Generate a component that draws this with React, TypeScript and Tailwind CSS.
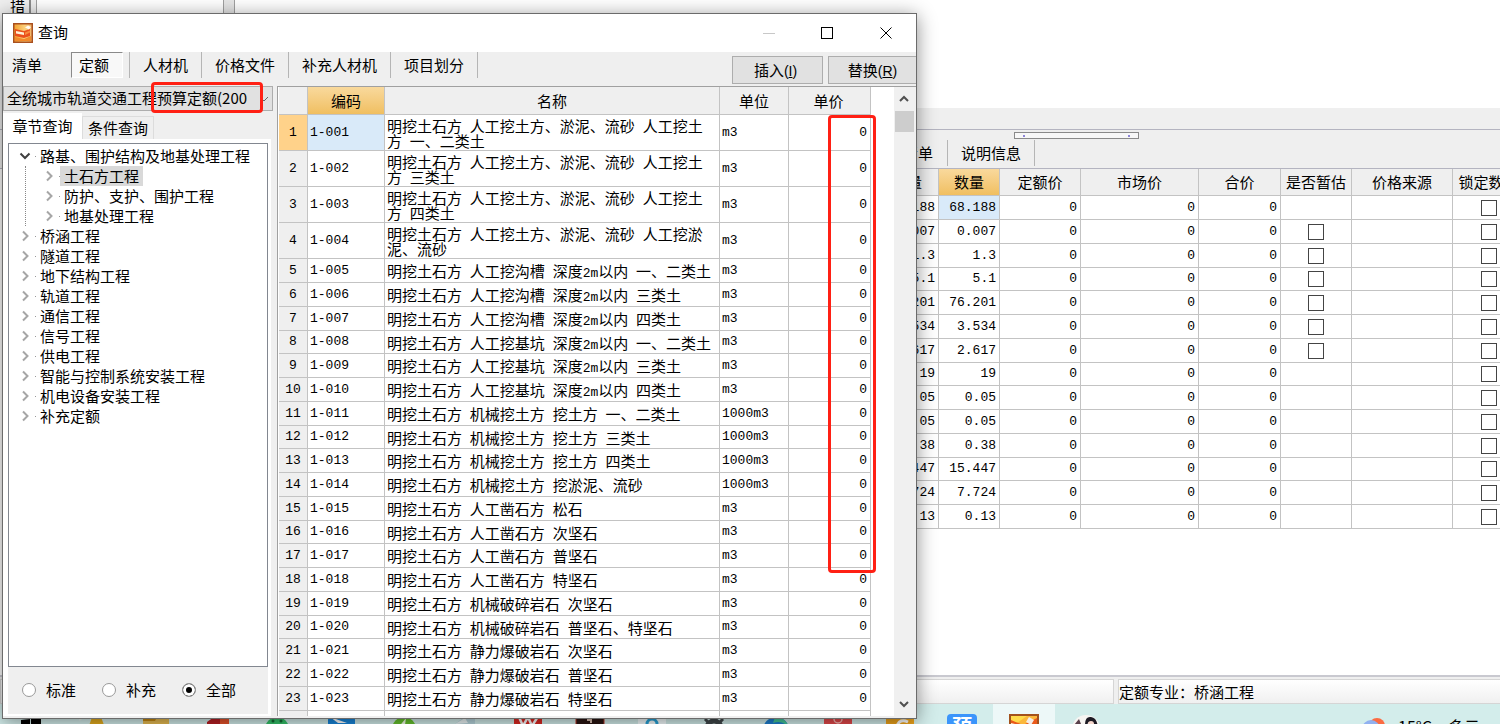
import type { ReactNode } from 'react';
import clsx from 'clsx';

type QuotaRow = { name: string; unit: string };

const quotas: QuotaRow[] = [
  { name: '明挖土石方 人工挖土方、淤泥、流砂 人工挖土方 一、二类土', unit: 'm3' },
  { name: '明挖土石方 人工挖土方、淤泥、流砂 人工挖土方 三类土', unit: 'm3' },
  { name: '明挖土石方 人工挖土方、淤泥、流砂 人工挖土方 四类土', unit: 'm3' },
  { name: '明挖土石方 人工挖土方、淤泥、流砂 人工挖淤泥、流砂', unit: 'm3' },
  { name: '明挖土石方 人工挖沟槽 深度2m以内 一、二类土', unit: 'm3' },
  { name: '明挖土石方 人工挖沟槽 深度2m以内 三类土', unit: 'm3' },
  { name: '明挖土石方 人工挖沟槽 深度2m以内 四类土', unit: 'm3' },
  { name: '明挖土石方 人工挖基坑 深度2m以内 一、二类土', unit: 'm3' },
  { name: '明挖土石方 人工挖基坑 深度2m以内 三类土', unit: 'm3' },
  { name: '明挖土石方 人工挖基坑 深度2m以内 四类土', unit: 'm3' },
  { name: '明挖土石方 机械挖土方 挖土方 一、二类土', unit: '1000m3' },
  { name: '明挖土石方 机械挖土方 挖土方 三类土', unit: '1000m3' },
  { name: '明挖土石方 机械挖土方 挖土方 四类土', unit: '1000m3' },
  { name: '明挖土石方 机械挖土方 挖淤泥、流砂', unit: '1000m3' },
  { name: '明挖土石方 人工凿石方 松石', unit: 'm3' },
  { name: '明挖土石方 人工凿石方 次坚石', unit: 'm3' },
  { name: '明挖土石方 人工凿石方 普坚石', unit: 'm3' },
  { name: '明挖土石方 人工凿石方 特坚石', unit: 'm3' },
  { name: '明挖土石方 机械破碎岩石 次坚石', unit: 'm3' },
  { name: '明挖土石方 机械破碎岩石 普坚石、特坚石', unit: 'm3' },
  { name: '明挖土石方 静力爆破岩石 次坚石', unit: 'm3' },
  { name: '明挖土石方 静力爆破岩石 普坚石', unit: 'm3' },
  { name: '明挖土石方 静力爆破岩石 特坚石', unit: 'm3' },
];

const amounts = [
  '68.188', '0.007', '1.3', '5.1', '76.201', '3.534', '2.617',
  '19', '0.05', '0.05', '0.38', '15.447', '7.724', '0.13',
];

const chapters = [
  '桥涵工程', '隧道工程', '地下结构工程', '轨道工程', '通信工程', '信号工程',
  '供电工程', '智能与控制系统安装工程', '机电设备安装工程', '补充定额',
];

const subChapters = ['土石方工程', '防护、支护、围护工程', '地基处理工程'];

const rowHeight = (i: number) => (i % 4 === 3 ? 'h-[23px]' : 'h-6');

const cell = 'border-r border-b border-[#c3c3c3] p-0';
const head = 'border-r border-b border-[#c3c3c3] p-0 font-normal bg-[#efefef]';
const headActive = 'bg-linear-to-b from-[#f9d99c] to-[#f0bf60]';
const mono = "font-['Liberation_Mono',monospace] text-[13px]";

/* Chinese text with the latin runs set in half-width type */
function Mixed({ text }: { text: string }) {
  return (
    <>
      {text.split(/([ -~]+)/).map((part, i) =>
        i % 2 ? (
          <span key={i} className="font-['Liberation_Mono',monospace] text-[13px] leading-0">
            {part}
          </span>
        ) : (
          part
        ),
      )}
    </>
  );
}

function AppIcon({ className }: { className?: string }) {
  return (
    <svg viewBox="0 0 20 20" className={className}>
      <defs>
        <linearGradient id="appIcon" x1="0" y1="0" x2="1" y2="0">
          <stop offset="0" stopColor="#f3a02c" />
          <stop offset="0.6" stopColor="#fbd07c" />
          <stop offset="1" stopColor="#f0b067" />
        </linearGradient>
      </defs>
      <rect x="0.75" y="0.75" width="18.5" height="18.5" fill="url(#appIcon)" stroke="#a9501f" strokeWidth="1.5" />
      <path d="M2 6 L11 8 L17 6 V13 L11 15 L2 13 Z" fill="#ea4f1c" />
      <path d="M3 8 L11 9.5 V12 L3 10.5 Z" fill="#fff1d6" />
      <path d="M12 9.5 L17 7.5 V9.5 L12 12 Z" fill="#f78a3c" />
      <path d="M12 4.5 L15 2.5 L18 4 L16 6.5 Z" fill="#fffaf0" />
      <path d="M2 14 L11 16 L18 13 V18 H2 Z" fill="#f28a2a" />
    </svg>
  );
}

function Chevron({ open }: { open?: boolean }) {
  return (
    <svg viewBox="0 0 12 12" className="size-3 shrink-0">
      <path
        d={open ? 'M1.5 3.5 L6 8 L10.5 3.5' : 'M4 1.5 L8.5 6 L4 10.5'}
        fill="none"
        stroke={open ? '#404040' : '#a6a6a6'}
        strokeWidth="2"
      />
    </svg>
  );
}

function TreeItem({ label, open, selected }: { label: string; open?: boolean; selected?: boolean }) {
  return (
    <div className="flex h-5 items-center">
      <Chevron open={open} />
      <span className="ml-1 w-px border-b border-[#999]" />
      <span className={clsx('px-1 leading-5', selected && 'bg-[#d9d9d9]')}>{label}</span>
    </div>
  );
}

function CheckBox({ label }: { label: string }) {
  return (
    <input
      type="checkbox"
      aria-label={label}
      className="mx-auto block size-4 appearance-none border border-[#444] bg-white"
    />
  );
}

function TitleBar() {
  return (
    <header className="flex h-[38px] items-center bg-white pl-2.5">
      <AppIcon className="size-5" />
      <h1 className="ml-[5px] flex-1 pb-0.5 text-[15px] leading-5">查询</h1>
      <button aria-label="最小化" className="flex h-full w-[58px] items-center justify-center">
        <span className="h-px w-3 bg-[#c8c8c8]" />
      </button>
      <button aria-label="最大化" className="flex h-full w-[58px] items-center justify-center">
        <span className="size-3 border border-black" />
      </button>
      <button aria-label="关闭" className="flex h-full w-[60px] items-center justify-center">
        <svg viewBox="0 0 12 12" className="size-3">
          <path d="M0.5 0.5 L11.5 11.5 M11.5 0.5 L0.5 11.5" stroke="#000" fill="none" />
        </svg>
      </button>
    </header>
  );
}

function Toolbar() {
  return (
    <div className="flex h-[34px]">
      <nav className="flex h-[26px]">
        <button className="w-[68px] pl-[9px] text-left">清单</button>
        <button className="h-[26px] w-[52px] border border-t-[#8a8a8a] border-r-white border-b-white border-l-[#8a8a8a] bg-[#f8f8f8] pl-[7px] text-left">
          定额
        </button>
        <span className="w-[7px] border-r border-[#b5b5b5]" />
        {['人材机', '价格文件', '补充人材机', '项目划分'].map((tab) => (
          <button key={tab} className="border-r border-[#b5b5b5] px-[13px]">
            {tab}
          </button>
        ))}
      </nav>
      <div className="flex flex-1 justify-end gap-[5px] pt-1 pb-0.5">
        <button className="w-[91px] border border-[#adadad] bg-[#e1e1e1] pr-1">
          插入<span className="font-['Liberation_Sans',sans-serif] text-sm">(<u>I</u>)</span>
        </button>
        <button className="w-[88px] border border-r-0 border-[#adadad] bg-[#e1e1e1]">
          替换<span className="font-['Liberation_Sans',sans-serif] text-sm">(<u>R</u>)</span>
        </button>
      </div>
    </div>
  );
}

function SidePanel() {
  return (
    <aside className="flex w-[270px] shrink-0 flex-col">
      <div className="relative">
        <select
          aria-label="定额库"
          className="block h-[25px] w-full appearance-none border border-[#adadad] bg-[#e1e1e1] pb-0.5 pl-[3px]"
        >
          <option>全统城市轨道交通工程预算定额(200</option>
        </select>
        <svg viewBox="0 0 10 6" className="pointer-events-none absolute top-2.5 right-1 h-1.5 w-2.5">
          <path d="M1 1 L5 5 L9 1" fill="none" stroke="#666" />
        </svg>
        <span className="pointer-events-none absolute -top-1 left-[148px] h-[31px] w-28 rounded border-3 border-[#ff2014]" />
      </div>

      <div className="mt-0.5 flex h-[26px] items-end">
        <button className="h-[26px] w-[79px] bg-white leading-6">章节查询</button>
        <button className="h-[23px] w-[72px] border border-b-0 border-[#dcdcdc] leading-5">条件查询</button>
      </div>

      <div className="mr-0.5 mb-0.5 flex flex-1 flex-col border-2 border-t-4 border-r-3 border-l-5 border-white">
        <div className="flex-1 border border-[#828790] bg-white pt-0.5 pl-2.5">
          <TreeItem label="路基、围护结构及地基处理工程" open />
          <div className="ml-1.5 border-l border-dotted border-[#888] pl-[17px]">
            {subChapters.map((label, i) => (
              <TreeItem key={label} label={label} selected={i === 0} />
            ))}
          </div>
          {chapters.map((label) => (
            <TreeItem key={label} label={label} />
          ))}
        </div>
        <div className="flex h-[47px] items-center gap-[26px] pb-0.5 pl-3.5">
          {['标准', '补充', '全部'].map((label) => (
            <label key={label} className="flex items-center gap-2.5">
              <input
                type="radio"
                name="scope"
                defaultChecked={label === '全部'}
                className="size-3.5 appearance-none rounded-full border border-[#999] bg-white checked:bg-black checked:shadow-[inset_0_0_0_3px_white]"
              />
              <span className="w-[30px]">{label}</span>
            </label>
          ))}
        </div>
      </div>
    </aside>
  );
}

function QuotaGrid() {
  return (
    <section className="relative mb-0.5 ml-1 flex flex-1 overflow-hidden border-t border-l border-[#a0a0a0] bg-white pl-px">
      <table className="w-[592px] shrink-0 table-fixed border-separate border-spacing-0 self-start">
        <thead>
          <tr className="h-7">
            <th className={clsx(head, 'w-[29px]')} />
            <th className={clsx(head, headActive, 'w-[77px]')}>编码</th>
            <th className={head}>名称</th>
            <th className={clsx(head, 'w-[69px]')}>单位</th>
            <th className={clsx(head, 'w-[82px] pr-0.5')}>单价</th>
          </tr>
        </thead>
        <tbody>
          {quotas.map((row, i) => (
            <tr key={i} className={i < 4 ? 'h-9' : rowHeight(i)}>
              <td className={clsx(cell, mono, 'text-center', i === 0 ? 'bg-[#ffd28a]' : 'bg-[#efefef]')}>{i + 1}</td>
              <td className={clsx(cell, mono, 'pl-0.5', i === 0 && 'bg-[#d9eaf9]')}>
                1-{String(i + 1).padStart(3, '0')}
              </td>
              <td className={clsx(cell, 'pl-0.5 leading-[15px]', i < 4 && 'pr-2')}>
                <Mixed text={row.name} />
              </td>
              <td className={clsx(cell, mono, 'pl-0.5')}>{row.unit}</td>
              <td className={clsx(cell, mono, 'pr-[3px] text-right')}>0</td>
            </tr>
          ))}
          <tr className="h-6">
            <td className={clsx(cell, 'bg-[#efefef]')} />
            <td className={cell} />
            <td className={clsx(cell, 'pl-0.5 leading-[15px]')}>
              <Mixed text="明挖土石方 机械挖翻斗车 土方 维" />
            </td>
            <td className={cell} />
            <td className={cell} />
          </tr>
        </tbody>
      </table>

      <div className="ml-auto flex w-[22px] flex-col items-center bg-[#f0f0f0] pr-0.5">
        <button aria-label="向上滚动" className="flex h-6 w-full items-center justify-center">
          <svg viewBox="0 0 10 8" className="h-2 w-2.5">
            <path d="M1 6 L5 2 L9 6" fill="none" stroke="#505050" strokeWidth="2" />
          </svg>
        </button>
        <span className="h-[21px] w-[19px] bg-[#cdcdcd]" />
        <button aria-label="向下滚动" className="mt-auto flex h-6 w-full items-center justify-center">
          <svg viewBox="0 0 10 8" className="h-2 w-2.5">
            <path d="M1 2 L5 6 L9 2" fill="none" stroke="#505050" strokeWidth="2" />
          </svg>
        </button>
      </div>
      <span className="pointer-events-none absolute top-7 left-[550px] h-[458px] w-12 rounded border-3 border-[#ff2014]" />
    </section>
  );
}

function QueryDialog() {
  return (
    <div
      role="dialog"
      aria-label="查询"
      className="absolute top-[13px] bottom-[5px] left-0.5 z-10 flex w-[915px] flex-col overflow-hidden border border-[#6b6b6b] bg-[#efefef] shadow-[0_3px_18px_rgba(0,0,0,0.45)]"
    >
      <TitleBar />
      <Toolbar />
      <div className="flex min-h-0 flex-1">
        <SidePanel />
        <QuotaGrid />
      </div>
    </div>
  );
}

function ResourceTable() {
  return (
    <table className="ml-[876px] w-[649px] table-fixed border-separate border-spacing-0">
      <thead>
        <tr className="h-[27px]">
          <th className={clsx(head, 'w-[63px]')}>含量</th>
          <th className={clsx(head, headActive, 'w-[61px]')}>数量</th>
          <th className={clsx(head, 'w-[81px]')}>定额价</th>
          <th className={clsx(head, 'w-[118px]')}>市场价</th>
          <th className={clsx(head, 'w-[82px]')}>合价</th>
          <th className={clsx(head, 'w-[71px]')}>是否暂估</th>
          <th className={clsx(head, 'w-[101px]')}>价格来源</th>
          <th className={head}>锁定数量</th>
        </tr>
      </thead>
      <tbody>
        {amounts.map((amount, i) => (
          <tr key={i} className={rowHeight(i)}>
            <td className={clsx(cell, mono, 'pr-[3px] text-right')}>{amount}</td>
            <td className={clsx(cell, mono, 'pr-[3px] text-right', i === 0 && 'bg-[#d9eaf9]')}>{amount}</td>
            <td className={clsx(cell, mono, 'pr-[3px] text-right')}>0</td>
            <td className={clsx(cell, mono, 'pr-[3px] text-right')}>0</td>
            <td className={clsx(cell, mono, 'pr-[3px] text-right')}>0</td>
            <td className={cell}>{i > 0 && i < 7 && <CheckBox label="是否暂估" />}</td>
            <td className={cell} />
            <td className={cell}>
              <CheckBox label="锁定数量" />
            </td>
          </tr>
        ))}
      </tbody>
    </table>
  );
}

function TaskIcon({ children }: { children: ReactNode }) {
  return (
    <svg viewBox="0 0 30 30" className="size-[30px]">
      {children}
    </svg>
  );
}

const taskIcons: ReactNode[] = [
  <path d="M4 6 L13 5 V15 H4 Z M14 5 L24 4 V15 H14 Z M4 16 H13 V25 L4 23 Z M14 16 H24 V27 L14 25 Z" fill="#000" />,
  <>
    <path d="M0 6 Q6 1 13 3" fill="none" stroke="#e6f1ec" strokeWidth="2" />
    <path d="M13 3 H22 L30 24 H6 Z" fill="#e5ad1f" />
  </>,
  <>
    <path d="M2 3 H14 L17 5 H28 V26 H2 Z" fill="#c98a10" />
    <path d="M15 5 H28 V26 H2 V7 H14 Z" fill="#e8bc52" />
  </>,
  <>
    <path d="M4 8 L11 3 H24 V28 L4 22 Z" fill="#b91f24" />
    <path d="M17 3 L26 5 V25 L17 28 Z" fill="#e8532a" />
  </>,
  <>
    <ellipse cx="12" cy="15" rx="12" ry="12" fill="#35c46a" />
    <circle cx="8" cy="7" r="1.5" fill="#126b33" />
    <circle cx="16" cy="7" r="1.5" fill="#126b33" />
  </>,
  <>
    <rect x="1" y="3" width="27" height="25" rx="3" fill="#1887dc" />
    <path d="M3 3 L20 9 L11 9 Z" fill="#fff" />
  </>,
  <>
    <circle cx="15" cy="15" r="12" fill="#66c32d" />
    <path d="M17 4 L9 14 H15 L12 22 L22 11 H16 Z" fill="#f4ffe6" />
  </>,
  <>
    <path d="M4 10 L12 4 L24 4 V26 H4 Z" fill="#b7d5dd" />
    <path d="M4 10 L14 4 L17 9 Z" fill="#eef7f8" />
  </>,
  <>
    <rect x="1" y="3" width="28" height="25" rx="2" fill="#dd2822" />
    <path d="M6 3 L10 12 L15 3 L19 12 L24 4" fill="none" stroke="#fff" strokeWidth="2.5" />
  </>,
  <>
    <rect x="1" y="3" width="28" height="25" fill="#2a1512" stroke="#bd3525" />
    <path d="M12 6 H16 V9" fill="none" stroke="#d9bfb0" strokeWidth="2" />
  </>,
  <>
    <rect x="1" y="3" width="28" height="25" rx="3" fill="#f3fbfd" />
    <circle cx="15" cy="10" r="5" fill="none" stroke="#29a4d9" strokeWidth="3" />
  </>,
  <>
    <circle cx="15" cy="14" r="7" fill="none" stroke="#40484b" strokeWidth="5" />
    <path d="M13 3 H17 V7 H13 Z M6 5 L9 8 M24 5 L21 8" fill="#40484b" stroke="#40484b" strokeWidth="3" />
  </>,
  <>
    <circle cx="15" cy="16" r="13" fill="#1d7fd0" />
    <path d="M14 3 Q24 3 28 13 Q21 6 12 9 Z" fill="#45c99a" />
  </>,
  <>
    <rect x="1" y="3" width="28" height="25" rx="3" fill="#e4494b" />
    <circle cx="15" cy="5" r="4" fill="none" stroke="#f9b8b2" strokeWidth="1.5" />
  </>,
  <>
    <rect x="1" y="3" width="28" height="25" rx="2" fill="#f0a51c" />
    <path d="M12 12 Q15 4 23 8" fill="none" stroke="#fff" strokeWidth="3" />
  </>,
];

function Taskbar() {
  return (
    <footer className="flex h-5 shrink-0 overflow-hidden bg-[#d3edeb] pl-px">
      {taskIcons.map((icon, i) => (
        <span key={i} className="flex h-12 w-[62px] shrink-0 justify-center pt-2.5">
          <TaskIcon>{icon}</TaskIcon>
        </span>
      ))}
      <span className="flex h-12 w-[62px] shrink-0 justify-center pt-2.5">
        <span className="size-[30px] rounded bg-[#3b95fb] text-center text-xl leading-6 font-bold text-white">预</span>
      </span>
      <span className="flex h-12 w-[62px] shrink-0 justify-center bg-[#edf8f8] pt-2.5">
        <TaskIcon>
          <rect x="1" y="1" width="28" height="28" fill="#fbb83c" stroke="#a3521c" strokeWidth="2" />
          <path d="M2 2 H18 L8 9 L2 7 Z" fill="#ffdc4a" />
          <path d="M2 6 L14 11 L28 4 V20 L14 22 L2 18 Z" fill="#ea5a1c" />
          <path d="M2 9 L14 12 V16 L2 13 Z" fill="#fff0d0" />
          <path d="M17 8 L20 3 L25 6 L22 11 Z" fill="#f3ede8" />
        </TaskIcon>
      </span>
      <span className="flex h-12 w-[62px] shrink-0 justify-center pt-2.5">
        <TaskIcon>
          <circle cx="15" cy="15" r="14" fill="#f7f5f2" />
          <path d="M14 11 Q14 2 20 3 Q27 4 27 16 H24 Q24 7 18 8 Q16 9 16 14 Z" fill="#1d1a24" />
          <path d="M3 11 L8 5 L10 10 Z" fill="#59414c" />
          <circle cx="20" cy="10" r="3" fill="#f5d7cc" />
        </TaskIcon>
      </span>
      <span className="mr-5 ml-auto flex h-12 items-start gap-3 pt-2.5">
        <svg viewBox="0 0 24 24" className="mt-1 size-6">
          <circle cx="15" cy="8" r="8" fill="#fb6b42" />
          <circle cx="9" cy="11" r="9" fill="#91b1f0" />
          <circle cx="17" cy="15" r="6" fill="#91b1f0" />
        </svg>
        <span className="flex gap-4 text-base leading-6">
          <span>15°C</span>
          <span>多云</span>
        </span>
      </span>
    </footer>
  );
}

export default function App() {
  return (
    <div className="relative flex h-screen flex-col overflow-hidden bg-white font-['Noto_Sans_CJK_SC',sans-serif] text-[15px] leading-5 text-black">
      {/* Main window behind the dialog */}
      <div className="flex h-[108px] shrink-0 items-start">
        <div className="h-full w-[31px] border-r-2 border-[#8c8c8c] bg-[#efefef] pl-2.5 leading-3">措</div>
        <div className="h-full w-1.5 border-r border-[#a0a0a0] bg-[#efefef]" />
        <div className="h-full w-[186px]" />
        <div className="h-full w-3 border-x border-[#a0a0a0] bg-[#e6e6e6]" />
      </div>
      <div className="h-[21px] shrink-0 bg-[#efefef]" />
      <div className="relative flex h-10 shrink-0 items-end border-y border-[#b4b4c0] bg-[#efefef] pb-0.5">
        <span className="absolute top-0.5 left-[1014px] flex h-[7px] w-[125px] items-center justify-between border border-[#8a8a8a] bg-[#f8f8f8] px-2">
          <i className="size-0.5 bg-[#8f86d8]" />
          <i className="size-0.5 bg-[#8f86d8]" />
        </span>
        <button className="h-[26px] w-[948px] border-r border-[#b5b5b5] pr-3.5 text-right">工程量清单</button>
        <button className="h-[26px] border-r border-[#b5b5b5] px-[13px]">说明信息</button>
      </div>
      <main className="min-h-0 flex-1 overflow-hidden">
        <ResourceTable />
      </main>
      <div className="flex h-[29px] shrink-0 gap-1 border-t-2 border-[#c9c9d0] bg-[#efefef] pt-0.5">
        <div className="w-[1114px] border border-[#d5d5d5] bg-linear-to-b from-white to-[#f0f0f0]" />
        <div className="flex-1 border border-r-0 border-[#d5d5d5] bg-linear-to-b from-white to-[#f0f0f0] leading-6">
          定额专业：桥涵工程
        </div>
      </div>
      <Taskbar />

      <QueryDialog />
    </div>
  );
}
